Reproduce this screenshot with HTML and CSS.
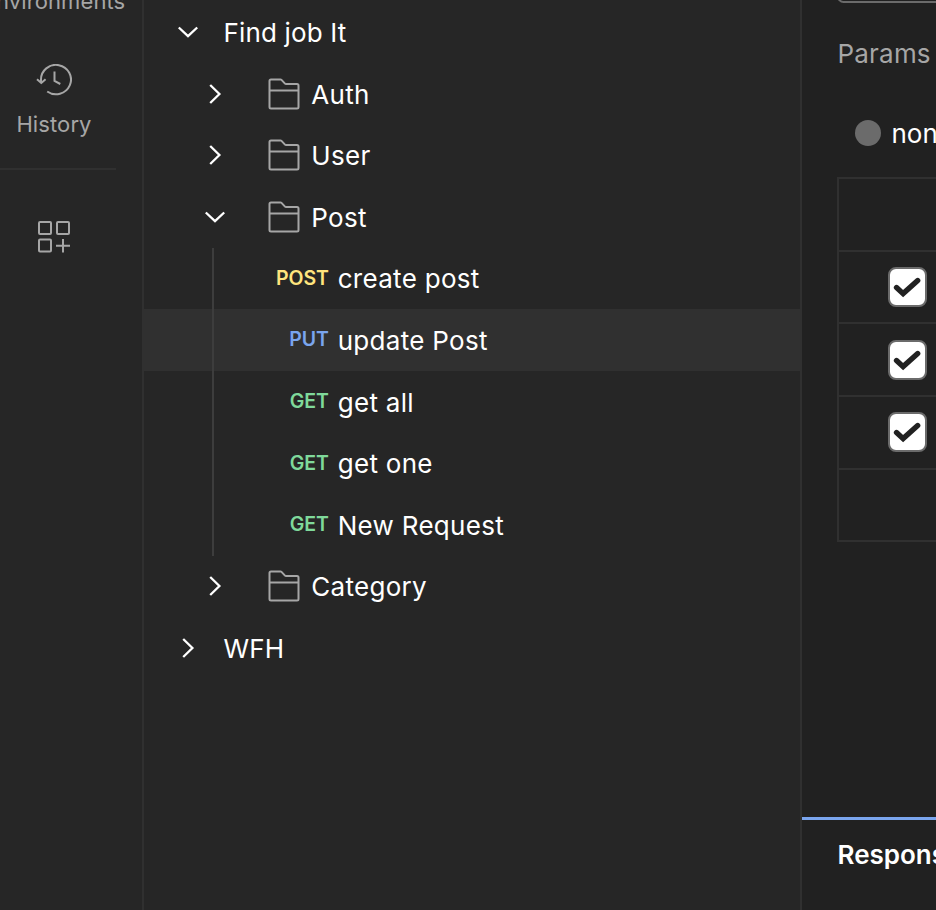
FILE: index.html
```html
<!DOCTYPE html>
<html lang="en">
<head>
<meta charset="utf-8">
<title>Collections</title>
<link rel="stylesheet" href="styles.css">
</head>
<body>
<svg class="defs" width="0" height="0">
  <symbol id="down" viewBox="0 0 24 24"><path d="M2.8 7.500 12 16.200 21.200 7.500"/></symbol>
  <symbol id="right" viewBox="0 0 24 24"><path d="M7.200 3 16.400 12 7.200 21"/></symbol>
  <symbol id="folder" viewBox="0 0 32 32"><path d="M1.500 12.600h29M3 1.500h9.500q.6 0 1 .4L17 5.600q.4.4 1 .4h11q1.500 0 1.500 1.500v21.500q0 1.500-1.500 1.500H3q-1.500 0-1.500-1.500V3q0-1.500 1.500-1.500z"/></symbol>
  <symbol id="check" viewBox="0 0 36 36"><path d="M6.700 18.500 13.500 24.800 28.500 11.300"/></symbol>
</svg>
<div class="app">
  <nav class="rail">
    <div class="rail-item environments"><span>Environments</span></div>
    <div class="rail-item history">
      <svg class="history-icon" viewBox="0 0 36 32"><path d="M5 19V16A15 14.700 0 1 1 11.200 27.500M1 15.200l4.300 3.800 4.300-3.800M18.500 7.500V16.800L24.300 20"/></svg>
      <span>History</span>
    </div>
    <hr class="divider">
    <svg class="grid-icon" viewBox="0 0 32 32"><rect x="1" y="1" width="12" height="12" rx="1"/><rect x="19" y="1" width="12" height="12" rx="1"/><rect x="1" y="18.500" width="12" height="12" rx="1"/><path d="M25 18v13.500M18 24.800h14"/></svg>
  </nav>

  <aside class="tree">
    <div class="row collection"><svg class="chevron"><use href="#down"/></svg><span class="name">Find job It</span></div>
    <div class="row folder"><svg class="chevron"><use href="#right"/></svg><svg class="folder-icon"><use href="#folder"/></svg><span class="name">Auth</span></div>
    <div class="row folder"><svg class="chevron"><use href="#right"/></svg><svg class="folder-icon"><use href="#folder"/></svg><span class="name">User</span></div>
    <div class="row folder"><svg class="chevron"><use href="#down"/></svg><svg class="folder-icon"><use href="#folder"/></svg><span class="name">Post</span></div>
    <div class="requests">
      <div class="row"><span class="method post">POST</span><span class="name">create post</span></div>
      <div class="row selected"><span class="method put">PUT</span><span class="name">update Post</span></div>
      <div class="row"><span class="method get">GET</span><span class="name">get all</span></div>
      <div class="row"><span class="method get">GET</span><span class="name">get one</span></div>
      <div class="row"><span class="method get">GET</span><span class="name">New Request</span></div>
    </div>
    <div class="row folder"><svg class="chevron"><use href="#right"/></svg><svg class="folder-icon"><use href="#folder"/></svg><span class="name">Category</span></div>
    <div class="row collection"><svg class="chevron"><use href="#right"/></svg><span class="name">WFH</span></div>
  </aside>

  <main class="editor">
    <section class="request">
      <div class="url"></div>
      <div class="tab">Params</div>
      <div class="body-type"><span class="radio"></span><span>none</span></div>
      <div class="table">
        <div class="cell"></div>
        <div class="cell"><span class="checkbox"><svg><use href="#check"/></svg></span></div>
        <div class="cell"><span class="checkbox"><svg><use href="#check"/></svg></span></div>
        <div class="cell"><span class="checkbox"><svg><use href="#check"/></svg></span></div>
        <div class="cell"></div>
      </div>
    </section>
    <section class="response">Response</section>
  </main>
</div>
</body>
</html>
```

FILE: styles.css
```css
* { box-sizing: border-box; }
body {
  margin: 0;
  overflow: hidden;
  background: #212121;
  color: #fff;
  font-family: Inter, sans-serif;
  font-size: 26px;
  line-height: 32px;
}
svg { fill: none; stroke: currentColor; stroke-width: 2; flex: none; }
.defs { position: absolute; }
.app { display: flex; width: 936px; height: 910px; overflow: hidden; white-space: nowrap; }

.rail {
  width: 144px;
  flex: none;
  background: #262626;
  border-right: 2px solid #303030;
  color: #a6a6a6;
  font-size: 22px;
  line-height: 28px;
  letter-spacing: 0.100px;
}
.rail-item { width: 108px; display: flex; flex-direction: column; align-items: center; }
.environments { height: 64px; }
.environments span { margin-top: -13px; }
.history { height: 104px; }
.history-icon { width: 36px; height: 32px; margin: 0 1px 14px 0; }
.divider { width: 116px; height: 2px; margin: 0; border: 0; background: #303030; }
.grid-icon { display: block; width: 32px; height: 32px; margin: 51px 0 0 38px; }

.tree { width: 658px; flex: none; padding-top: 1.200px; background: #262626; border-right: 2px solid #303030; letter-spacing: 0.300px; }
.row { display: flex; align-items: center; height: 61.600px; padding-left: 32px; }
.row.folder { padding-left: 58.700px; }
.chevron { width: 24px; height: 24px; margin-right: 23.500px; stroke-width: 2.300; }
.collection { letter-spacing: 0.150px; }
.folder .chevron { margin-right: 41.300px; }
.folder-icon { width: 32px; height: 32px; margin: 0 11.300px 0 0; color: #a6a6a6; }
.requests { position: relative; }
.requests::after { content: ""; position: absolute; left: 68px; top: 0; bottom: 0; width: 2px; background: #3d3d3d; }
.requests .row { padding-left: 0; }
.selected { background: #303030; }
.method { width: 185px; margin: -1px 8.700px 0 0; text-align: right; font-size: 19.500px; font-weight: 600; letter-spacing: 0; }
.name { padding-top: 2px; }
.post { color: #ffe47e; }
.put { color: #7aa5ee; }
.get { color: #7fd99a; }

.editor { flex: 1; display: flex; flex-direction: column; min-width: 0; }
.request { height: 817px; padding-left: 35px; overflow: hidden; }
.url { width: 300px; height: 13px; margin-top: -10px; border: 2px solid #6b6b6b; border-radius: 8px; }
.tab { margin-top: 35px; padding-left: 0.500px; color: #a6a6a6; letter-spacing: 0.200px; }
.body-type { display: flex; align-items: center; gap: 10.500px; margin: 47px 0 28px 18px; }
.body-type span:last-child { padding-top: 1px; margin-bottom: -1px; }
.radio { flex: none; width: 26px; height: 26px; border-radius: 50%; background: #6b6b6b; }
.table { width: 300px; border: 2px solid #303030; border-top: 0; }
.cell { display: flex; align-items: center; height: 72.700px; padding-left: 49px; border-top: 2px solid #303030; }
.checkbox { width: 39px; height: 40px; border: 2px solid #6b6b6b; border-radius: 8px; background: #fff; color: #212121; }
.checkbox svg { display: block; width: 35px; height: 36px; stroke-width: 5.500; stroke-linecap: round; }
.response { flex: 1; padding: 19px 0 0 35.500px; border-top: 3px solid #7aa5ee; font-weight: 600; }
```
